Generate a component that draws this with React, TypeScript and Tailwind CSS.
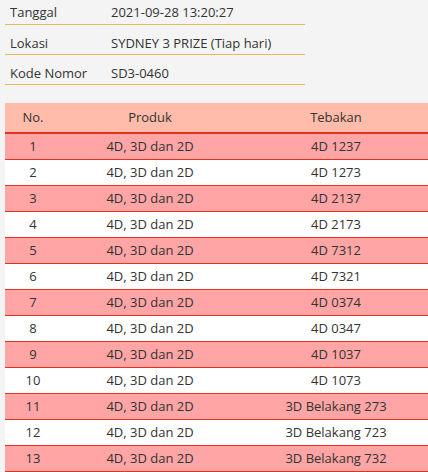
const info = [
  { label: "Tanggal", value: "2021-09-28 13:20:27" },
  { label: "Lokasi", value: "SYDNEY 3 PRIZE (Tiap hari)" },
  { label: "Kode Nomor", value: "SD3-0460" },
];

const rows = [
  "4D 1237",
  "4D 1273",
  "4D 2137",
  "4D 2173",
  "4D 7312",
  "4D 7321",
  "4D 0374",
  "4D 0347",
  "4D 1037",
  "4D 1073",
  "3D Belakang 273",
  "3D Belakang 723",
  "3D Belakang 732",
];

export default function App() {
  return (
    <div
      className="h-[472px] w-[428px] overflow-hidden bg-[#f4f4f4] text-[13px] text-[#333]"
      style={{ fontFamily: '"Open Sans", "Liberation Sans", sans-serif' }}
    >
      <div className="ml-[5px] w-[300px]">
        {info.map((item, i) => (
          <div
            className={`flex border-b border-[#e2bd55] px-[5px] leading-[20px] ${i === 0 ? "h-[25px] pt-[2px]" : "h-[30px] pt-[8px]"}`}
            key={item.label}
          >
            <span className="w-[101px]">{item.label}</span>
            <span>{item.value}</span>
          </div>
        ))}
      </div>

      <div className="ml-[5px] mt-[18px] w-[428px]">
        <div className="grid h-[31px] grid-cols-[56px_178px_194px] items-center border-b-2 border-[#e8321e] bg-[#ffbcaa] text-center">
          <span>No.</span>
          <span>Produk</span>
          <span>Tebakan</span>
        </div>
        {rows.map((guess, i) => (
          <div
            className={`grid h-[26px] grid-cols-[56px_178px_194px] items-center border-b border-[#e8321e] text-center ${i % 2 === 0 ? "bg-[#ffa5a5]" : "bg-white"}`}
            key={guess}
          >
            <span>{i + 1}</span>
            <span>4D, 3D dan 2D</span>
            <span>{guess}</span>
          </div>
        ))}
      </div>
    </div>
  );
}
